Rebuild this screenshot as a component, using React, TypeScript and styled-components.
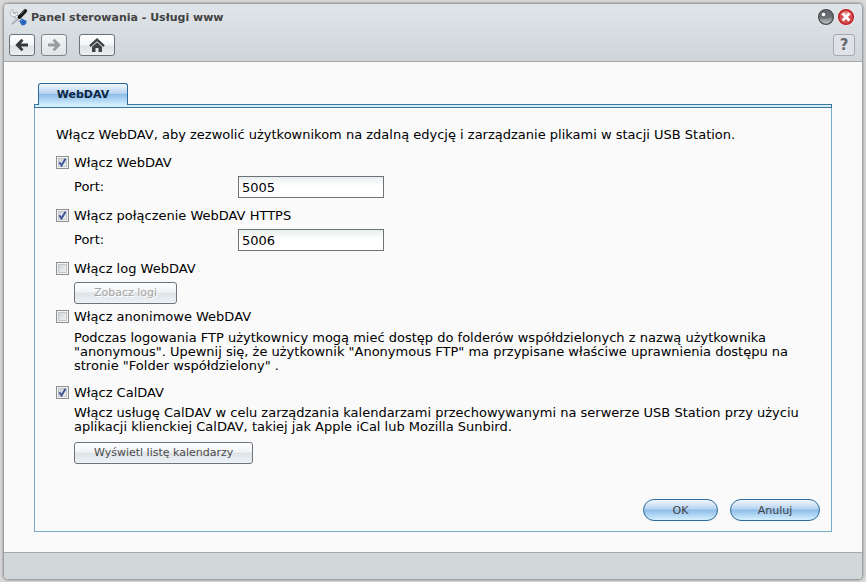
import React, { useState } from 'react';
import styled, { createGlobalStyle } from 'styled-components';

const PageStyle = createGlobalStyle`
  *, *::before, *::after { box-sizing: border-box; }
  body {
    margin: 0;
    background: #d9d9d9;
    color: #000;
    font: 13px/14px Verdana, "DejaVu Sans", sans-serif;
  }
  button, input { font-family: inherit; }
`;

const Desktop = styled.div`
  display: flex;
  min-height: 100vh;
  padding: 3px 3px 2px;
`;

const Window = styled.main`
  flex: 1;
  min-width: 0;
  display: flex;
  flex-direction: column;
  overflow: hidden;
  border: 1px solid #9ba0a4;
  border-radius: 5px;
  background: #fafafa;
  box-shadow: 0 0 3px #888;
`;

const Header = styled.header`
  padding: 0 7px 5px 5px;
  border-bottom: 1px solid #a5a9ac;
  background: linear-gradient(#e0e5e9, #cfd4d8);
`;

const TitleBar = styled.div`
  display: flex;
  align-items: center;
  height: 26px;
  margin-bottom: 4px;
`;

const Title = styled.h1`
  flex: 1;
  margin: 2px 0 0 3px;
  color: #434343;
  font-size: 11px;
  line-height: 14px;
`;

const WindowControls = styled.div`
  display: flex;
  gap: 2px;
`;

const RoundButton = styled.button`
  width: 18px;
  height: 18px;
  padding: 0;
  border: 0;
  background: none;
  svg { display: block; }
`;

const Toolbar = styled.nav`
  display: flex;
  gap: 6px;
`;

const ToolButton = styled.button<{ $wide?: boolean; $flat?: boolean }>`
  display: flex;
  align-items: center;
  justify-content: center;
  width: ${p => (p.$wide ? 36 : p.$flat ? 22 : 26)}px;
  height: 22px;
  margin-left: ${p => (p.$flat ? 'auto' : p.$wide ? '6px' : 0)};
  padding: 0;
  border: 1px solid ${p => (p.$flat ? '#a5abb0' : '#6b7177')};
  border-radius: 3px;
  background: ${p => (p.$flat ? '#dfe3e7' : 'linear-gradient(#fff, #f2f4f5 50%, #dde1e4 55%, #edf0f2)')};
  color: #666a6e;
  font-size: 15px;
  font-weight: bold;
  line-height: 18px;
  &:disabled { border-color: #7f858a; background: linear-gradient(#f3f5f6, #e0e4e7); }
`;

const Body = styled.div`
  flex: 1;
  display: flex;
  flex-direction: column;
  padding: 21px 30px 20px;
`;

const TabList = styled.div`
  display: flex;
  padding-left: 4px;
`;

const Tab = styled.button`
  z-index: 1;
  width: 90px;
  height: 22px;
  margin-bottom: -1px;
  padding: 0 0 1px;
  border: 1px solid #29699c;
  border-bottom: 0;
  border-radius: 3px 3px 0 0;
  background: linear-gradient(#f4f8fd, #b6d3f1 45%, #8dbce9 50%, #d3effd);
  color: #0c2745;
  font-size: 11px;
  font-weight: bold;
`;

const Panel = styled.section`
  flex: 1;
  display: flex;
  flex-direction: column;
  border: 1px solid #78a9c8;
  border-top: 0;
`;

const Strip = styled.div`
  height: 4px;
  margin: 0 -1px;
  border: 1px solid #39749c;
  background: #d3effd;
`;

const Form = styled.form`
  flex: 1;
  display: flex;
  flex-direction: column;
  padding: 20px 11px 10px 21px;
`;

const Intro = styled.p`
  margin: 0 0 13px;
`;

const CheckRow = styled.label`
  display: flex;
  align-items: center;
  gap: 5px;
  height: 15px;
`;

const Checkbox = styled.input`
  appearance: none;
  width: 13px;
  height: 13px;
  margin: 0;
  border: 1px solid #8e8f8f;
  background: linear-gradient(135deg, #c9cdd3, #f7f7f7);
  box-shadow: inset 0 0 0 1px #f4f4f4, inset 0 0 0 2px #c2c5ca;
`;

const CheckCell = styled.span`
  display: grid;
  > * { grid-area: 1 / 1; }
  svg { pointer-events: none; }
`;

const Detail = styled.div<{ $before?: number; $after?: number }>`
  margin: ${p => p.$before ?? 6}px 0 ${p => p.$after ?? 10}px;
  padding-left: 18px;
`;

const PortRow = styled(Detail)`
  display: grid;
  grid-template-columns: 164px 146px;
  align-items: center;
`;

const TextBox = styled.input`
  height: 22px;
  padding: 0 3px;
  border: 1px solid #6b7278;
  border-radius: 0;
  background: linear-gradient(#eaeeee, #fff 9px);
  color: #000;
  font-size: 13px;
`;

const Note = styled.p`
  max-width: 736px;
  margin: 0;
`;

const PushButton = styled.button`
  height: 22px;
  padding: 0 19px;
  border: 1px solid #6b747c;
  border-radius: 3px;
  background: linear-gradient(#fff, #f1f3f5 45%, #dee3e7 50%, #edf2f5);
  color: #4a4a4a;
  font-size: 11px;
  line-height: 14px;
  &:disabled { color: #a5a5a5; text-shadow: 1px 1px #fff; }
`;

const Actions = styled.div`
  display: flex;
  justify-content: flex-end;
  gap: 12px;
  margin-top: auto;
`;

const ActionButton = styled.button<{ $wide?: boolean }>`
  width: ${p => (p.$wide ? 90 : 75)}px;
  height: 22px;
  padding: 0;
  border: 1px solid #2b6b9b;
  border-radius: 11px;
  background: linear-gradient(#f3f8fd, #b6d3f1 45%, #8dbce9 50%, #d5f0fe);
  color: #434343;
  font-size: 11px;
`;

const StatusBar = styled.footer`
  height: 27px;
  border-top: 1px solid #a5a9ac;
  background: #d2d7da;
`;

const ToolsIcon = () => (
  <svg width="19" height="18" viewBox="0 0 19 18" aria-hidden="true">
    <path d="M5 6 13 14" stroke="#969da3" strokeWidth="4" strokeLinecap="round" />
    <path d="M5 6 13 14" stroke="#f5f6f7" strokeWidth="2.4" strokeLinecap="round" />
    <path d="M4 1.6a3.5 3.5 0 1 0 4.2 2.2L6 5.8 4 4.8Z" fill="#f3f4f5" stroke="#a3a9ae" strokeWidth=".8" />
    <path d="m3 16 6-6" stroke="#9299a0" strokeWidth="2" />
    <path d="m3 15.5 5.5-5.5" stroke="#eee" />
    <path d="m10.5 9 5.7-6" stroke="#161616" strokeWidth="3.8" strokeLinecap="round" />
    <path d="m11.5 6.5 3.7-4" stroke="#777" strokeWidth=".8" />
    <path d="m10.5 12.5 2.5-2 4.5 2.5v2.3l-2.3 2h-2.7Z" fill="#2467bc" />
    <path d="m12 13 1.6-1.2" stroke="#79b0ed" />
  </svg>
);

const ArrowIcon = ({ forward = false }: { forward?: boolean }) => (
  <svg width="14" height="14" viewBox="0 0 14 14" fill="none" aria-hidden="true">
    <path
      d={forward ? 'M1 7h10M6.5 1.8 11.7 7l-5.2 5.2' : 'M13 7H3M7.5 1.8 2.3 7l5.2 5.2'}
      stroke={forward ? '#969b9f' : '#35393d'}
      strokeWidth="2.8"
    />
  </svg>
);

const HomeIcon = () => (
  <svg width="16" height="14" viewBox="0 0 16 14" aria-hidden="true">
    <path d="M3 8.5 8 4l5 4.5V14H9.5v-4h-3v4H3Z" fill="#3d4246" />
    <path d="M1 8.2 8 1.7l7 6.5" fill="none" stroke="#3d4246" strokeWidth="2.4" />
    <path d="M2.5 9 8 4l5.5 5" fill="none" stroke="#e8eaec" strokeWidth=".6" />
  </svg>
);

const MinimizeIcon = () => (
  <svg width="18" height="18" viewBox="0 0 18 18" aria-hidden="true">
    <defs>
      <linearGradient id="sphere" x2="0" y2="1">
        <stop stopColor="#6a6f73" />
        <stop offset=".5" stopColor="#747a7e" />
        <stop offset="1" stopColor="#c5c9cb" />
      </linearGradient>
    </defs>
    <circle cx="9" cy="9" r="8.5" fill="#f4f5f6" />
    <circle cx="9" cy="9" r="7.4" fill="url(#sphere)" stroke="#45494d" strokeWidth="1.3" />
    <path d="M2.5 10q6 2 13-1.5a6.7 6.7 0 0 0-13-2Z" fill="#5f6468" opacity=".6" />
    <circle cx="6.5" cy="6.5" r="1.8" fill="#fff" />
  </svg>
);

const CloseIcon = () => (
  <svg width="18" height="18" viewBox="0 0 18 18" aria-hidden="true">
    <circle cx="9" cy="9" r="8.5" fill="#f4f5f6" />
    <circle cx="9" cy="9" r="7.4" fill="#d64b4b" stroke="#b91e22" strokeWidth="1.3" />
    <path d="M3.5 7a6 6 0 0 1 11 0Z" fill="#e58d8d" />
    <path d="m5.6 5.6 6.8 6.8m0-6.8-6.8 6.8" stroke="#fff" strokeWidth="2.8" />
  </svg>
);

function CheckOption({ label, initial = false }: { label: string; initial?: boolean }) {
  const [checked, setChecked] = useState(initial);
  return (
    <CheckRow>
      <CheckCell>
        <Checkbox type="checkbox" checked={checked} onChange={e => setChecked(e.target.checked)} />
        {checked && (
          <svg width="13" height="13" viewBox="0 0 13 13" fill="none" aria-hidden="true">
            <path d="m3.3 6.3 2.2 3.2 4-6.8" stroke="#41569b" strokeWidth="2" />
          </svg>
        )}
      </CheckCell>
      {label}
    </CheckRow>
  );
}

function PortField({ id, value }: { id: string; value: string }) {
  return (
    <PortRow>
      <label htmlFor={id}>Port:</label>
      <TextBox id={id} defaultValue={value} />
    </PortRow>
  );
}

export default function App() {
  return (
    <>
      <PageStyle />
      <Desktop>
        <Window>
          <Header>
            <TitleBar>
              <ToolsIcon />
              <Title>Panel sterowania - Usługi www</Title>
              <WindowControls>
                <RoundButton aria-label="Minimalizuj"><MinimizeIcon /></RoundButton>
                <RoundButton aria-label="Zamknij"><CloseIcon /></RoundButton>
              </WindowControls>
            </TitleBar>
            <Toolbar>
              <ToolButton aria-label="Wstecz"><ArrowIcon /></ToolButton>
              <ToolButton aria-label="Dalej" disabled><ArrowIcon forward /></ToolButton>
              <ToolButton aria-label="Strona główna" $wide><HomeIcon /></ToolButton>
              <ToolButton aria-label="Pomoc" $flat>?</ToolButton>
            </Toolbar>
          </Header>
          <Body>
            <TabList role="tablist">
              <Tab role="tab" aria-selected="true">WebDAV</Tab>
            </TabList>
            <Panel role="tabpanel">
              <Strip />
              <Form onSubmit={e => e.preventDefault()}>
                <Intro>Włącz WebDAV, aby zezwolić użytkownikom na zdalną edycję i zarządzanie plikami w stacji USB Station.</Intro>
                <CheckOption label="Włącz WebDAV" initial />
                <PortField id="http-port" value="5005" />
                <CheckOption label="Włącz połączenie WebDAV HTTPS" initial />
                <PortField id="https-port" value="5006" />
                <CheckOption label="Włącz log WebDAV" />
                <Detail $after={5}>
                  <PushButton type="button" disabled>Zobacz logi</PushButton>
                </Detail>
                <CheckOption label="Włącz anonimowe WebDAV" />
                <Detail $before={7} $after={12}>
                  <Note>
                    Podczas logowania FTP użytkownicy mogą mieć dostęp do folderów współdzielonych z nazwą użytkownika
                    "anonymous". Upewnij się, że użytkownik "Anonymous FTP" ma przypisane właściwe uprawnienia dostępu na
                    stronie "Folder współdzielony" .
                  </Note>
                </Detail>
                <CheckOption label="Włącz CalDAV" initial />
                <Detail $after={8}>
                  <Note>
                    Włącz usługę CalDAV w celu zarządzania kalendarzami przechowywanymi na serwerze USB Station przy użyciu
                    aplikacji klienckiej CalDAV, takiej jak Apple iCal lub Mozilla Sunbird.
                  </Note>
                </Detail>
                <Detail $before={0}>
                  <PushButton type="button">Wyświetl listę kalendarzy</PushButton>
                </Detail>
                <Actions>
                  <ActionButton type="submit">OK</ActionButton>
                  <ActionButton type="button" $wide>Anuluj</ActionButton>
                </Actions>
              </Form>
            </Panel>
          </Body>
          <StatusBar />
        </Window>
      </Desktop>
    </>
  );
}
